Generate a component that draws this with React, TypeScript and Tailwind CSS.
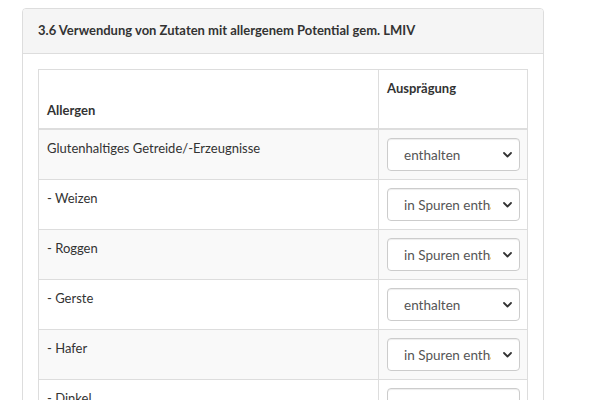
const ROWS: { name: string; value: string }[] = [
  { name: "Glutenhaltiges Getreide/-Erzeugnisse", value: "enthalten" },
  { name: "- Weizen", value: "in Spuren enthalten" },
  { name: "- Roggen", value: "in Spuren enthalten" },
  { name: "- Gerste", value: "enthalten" },
  { name: "- Hafer", value: "in Spuren enthalten" },
  { name: "- Dinkel", value: "enthalten" },
];

const Chevron = () => (
  <svg width="9" height="6" viewBox="0 0 9 6" className="shrink-0">
    <path d="M1 1 L4.5 4.5 L8 1" fill="none" stroke="#333" strokeWidth="1.8" strokeLinecap="round" strokeLinejoin="round" />
  </svg>
);

const FakeSelect = ({ value }: { value: string }) => (
  <div className="flex h-[33px] w-[133px] items-center rounded-[4px] border border-[#ccc] bg-white pl-[16px] pr-[5px] shadow-[inset_0_1px_1px_rgba(0,0,0,0.075)]">
    <div className="w-[87px] overflow-hidden whitespace-nowrap text-[13.5px] text-[#555]">{value}</div>
    <div className="ml-auto flex w-[14px] justify-center">
      <Chevron />
    </div>
  </div>
);

export default function App() {
  return (
    <div className="min-h-[400px] bg-white pl-[22px] pt-[8px] text-[#333]" style={{ fontFamily: "Lato, 'Noto Sans', sans-serif" }}>
      <div className="w-[522px] overflow-hidden rounded-[4px] border border-[#ddd]">
        <div className="flex h-[45px] items-center border-b border-[#ddd] bg-[#f5f5f5] px-[15px] text-[13px] font-bold">
          3.6 Verwendung von Zutaten mit allergenem Potential gem. LMIV
        </div>
        <div className="p-[15px]">
          <div className="w-[490px] border border-[#ddd] text-[13px] leading-[20px]">
            <div className="grid grid-cols-[339px_149px] border-b-2 border-[#ddd]">
              <div className="flex h-[58px] items-end px-[8px] pb-[8px] font-bold">Allergen</div>
              <div className="h-[58px] border-l border-[#ddd] px-[8px] pt-[8px] font-bold">Ausprägung</div>
            </div>
            {ROWS.map((r, i) => (
              <div
                key={r.name}
                className={`grid grid-cols-[339px_149px] ${i > 0 ? "border-t border-[#ddd]" : ""} ${i % 2 === 0 ? "bg-[#f9f9f9]" : "bg-white"}`}
              >
                <div className="px-[8px] pt-[8px]">{r.name}</div>
                <div className="border-l border-[#ddd] px-[8px] py-[8px]">
                  <FakeSelect value={r.value} />
                </div>
              </div>
            ))}
          </div>
        </div>
      </div>
    </div>
  );
}
